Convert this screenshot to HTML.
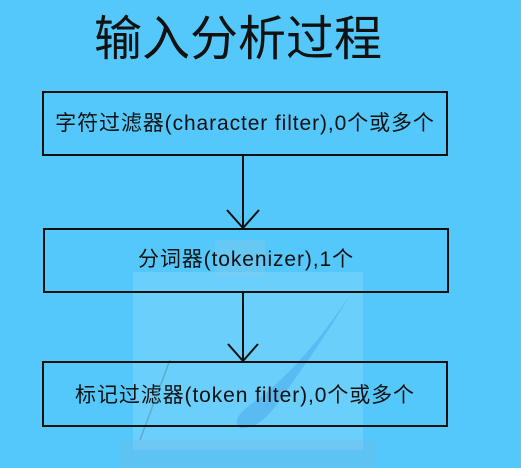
<!DOCTYPE html>
<html><head><meta charset="utf-8"><style>
html,body{margin:0;padding:0}
body{width:521px;height:468px;background:#55c8fb;position:relative;overflow:hidden;font-family:"Liberation Sans","Noto Sans CJK SC",sans-serif;color:#111}
.t{position:absolute;left:94px;top:11px;font-size:48px;line-height:58px;white-space:nowrap}
.b{position:absolute;border:2px solid #111;box-sizing:border-box;display:flex;align-items:center;justify-content:center;font-size:21px;letter-spacing:0.9px;white-space:nowrap}
.wm{position:absolute;background:rgba(255,255,255,0.13)}
</style></head><body>
<div class="wm" style="left:133px;top:272px;width:230px;height:178px"></div>
<div class="wm" style="left:120px;top:440px;width:255px;height:28px;background:rgba(120,180,220,0.25)"></div>
<div class="wm" style="left:215px;top:240px;width:50px;height:35px;background:rgba(160,200,220,0.25)"></div>
<svg style="position:absolute;left:0;top:0" width="521" height="468">
<path d="M350 295 Q330 330 280 400 Q260 430 240 428 Q230 420 250 405 Q300 370 350 295Z" fill="rgba(60,150,230,0.35)"/>
<line x1="170" y1="360" x2="140" y2="440" stroke="rgba(80,120,140,0.4)" stroke-width="1.5"/>
<line x1="243" y1="155" x2="243" y2="228" stroke="#111" stroke-width="2"/>
<polyline points="227,210 243,228 259,210" fill="none" stroke="#111" stroke-width="2"/>
<line x1="243" y1="292" x2="243" y2="360" stroke="#111" stroke-width="2"/>
<polyline points="228,344 243,361 258,344" fill="none" stroke="#111" stroke-width="2"/>
</svg>
<div class="t">输入分析过程</div>
<div class="b" style="left:42px;top:91px;width:406px;height:65px;padding-bottom:4px">字符过滤器(character filter),0个或多个</div>
<div class="b" style="left:43px;top:228px;width:406px;height:65px;padding-bottom:6px">分词器(tokenizer),1个</div>
<div class="b" style="left:42px;top:361px;width:406px;height:66px">标记过滤器(token filter),0个或多个</div>
</body></html>
